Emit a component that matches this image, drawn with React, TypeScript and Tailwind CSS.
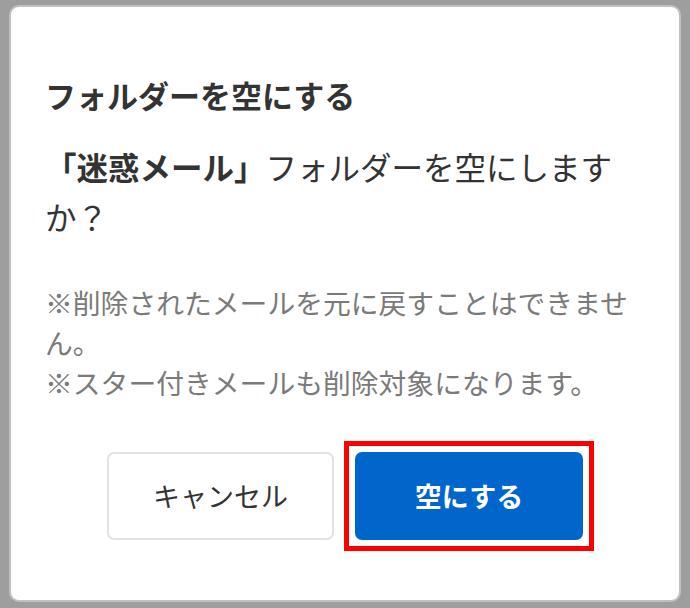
import React from 'react'

const font = { fontFamily: '"Noto Sans CJK JP", "Noto Sans", sans-serif' }

export default function App() {
  return (
    <div
      className="w-[690px] h-[608px] bg-[#9e9e9e] pt-[7px] pl-[11px] pr-[11px] pb-[8px]"
      style={font}
    >
      {/* Dialog */}
      <div className="flex flex-col h-full bg-white rounded-[8px] shadow-[0_0_0_2px_rgba(255,255,255,0.35)] px-[34px] pt-[66px]">
        <h2 className="text-[31px] leading-[44px] font-bold text-[#333333]">
          フォルダーを空にする
        </h2>

        <p className="mt-[24px] text-[31.5px] leading-[50px] text-[#333333]">
          <span className="font-bold">「迷惑メール」</span>フォルダーを空にしますか？
        </p>

        <div className="mt-[41px] text-[27.8px] leading-[40px] text-[#7a7a7a]">
          <p>※削除されたメールを元に戻すことはできません。</p>
          <p>※スター付きメールも削除対象になります。</p>
        </div>

        {/* Actions */}
        <div className="mt-[50px] flex justify-center gap-[21px]">
          <button className="w-[227px] h-[88px] rounded-[7px] border-2 border-[#e2e2e2] bg-white text-[27px] text-[#333333]">
            キャンセル
          </button>
          <div className="relative">
            <button className="w-[228px] h-[88px] rounded-[7px] bg-[#0066cc] text-[27px] font-bold text-white">
              空にする
            </button>
            {/* highlight frame */}
            <span className="pointer-events-none absolute -inset-[11px] border-[5px] border-[#ff0000]" />
          </div>
        </div>
      </div>
    </div>
  )
}
